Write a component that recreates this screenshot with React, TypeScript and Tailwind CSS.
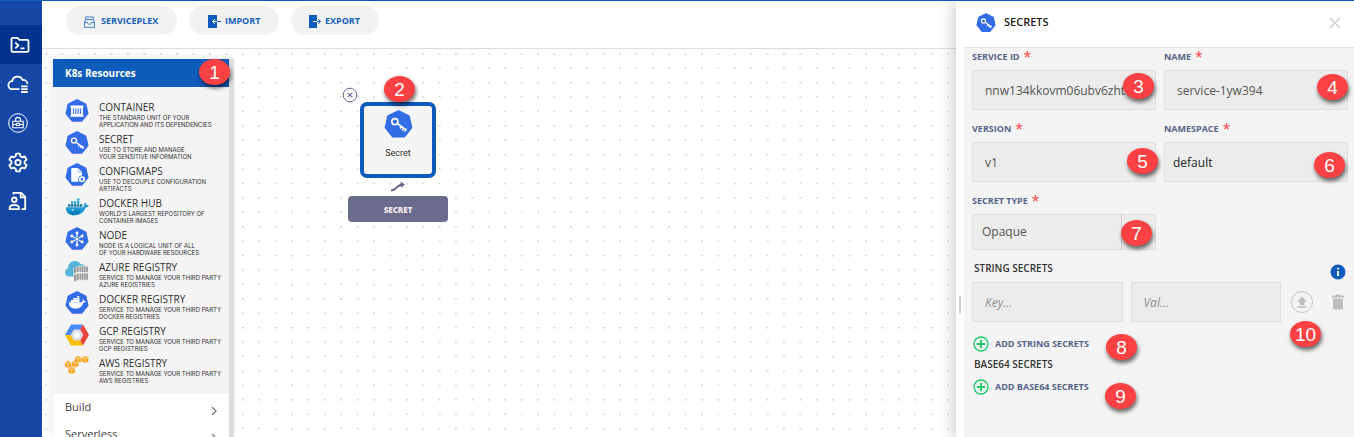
import type { ReactNode } from 'react';

const HEPTAGON = '12,1.2 20.4,5.3 22.5,14.4 16.7,21.7 7.3,21.7 1.5,14.4 3.6,5.3';

function Heptagon({ size, children }: { size: number; children: ReactNode }) {
  return (
    <svg width={size} height={size} viewBox="0 0 24 24" className="shrink-0" aria-hidden="true">
      <polygon points={HEPTAGON} fill="#326de6" stroke="#326de6" strokeWidth="2" strokeLinejoin="round" />
      {children}
    </svg>
  );
}

function KeyIcon({ size }: { size: number }) {
  return (
    <Heptagon size={size}>
      <g fill="none" stroke="#fff" strokeWidth="1.4">
        <circle cx="9" cy="9.6" r="2.5" />
        <path d="M11 11.2 18.2 16.4M14.4 13.8l-1.2 1.6M16.3 15.2l-1.2 1.7M18.6 15.4l-1.4 2.4" />
      </g>
    </Heptagon>
  );
}

function ContainerIcon() {
  return (
    <Heptagon size={24}>
      <path d="M5.500 6.500h13v2h-.6v7.600h.6v1.600h-13v-1.600h.6V8.500h-.6z" fill="#fff" />
      <path d="M8.500 9.500v5.500M10.800 9.500v5.500M13.100 9.500v5.500M15.400 9.500v5.500" stroke="#326de6" strokeWidth="1.100" />
    </Heptagon>
  );
}

function ConfigIcon() {
  return (
    <Heptagon size={24}>
      <path d="M7.200 5h6l3.800 4v4a4 4 0 0 0-3 5.800H7.200a1 1 0 0 1-1-1V6a1 1 0 0 1 1-1z" fill="#fff" />
      <path d="m13 5.200.2 3.700 3.600.2" stroke="#326de6" strokeWidth=".5" fill="none" />
      <circle cx="17" cy="16.300" r="3.700" fill="#326de6" />
      <circle cx="17" cy="16.300" r="2.200" fill="none" stroke="#fff" strokeWidth="1.700" />
    </Heptagon>
  );
}

function DockerHubIcon() {
  return (
    <svg width="24" height="24" viewBox="0 0 24 24" aria-hidden="true">
      <path d="M.8 12.200h17c1.200 0 1.600-.9 1.500-2.200-.1-1.400.2-2 .8-2.600 1 .7 1.400 1.700 1.300 2.700 1-.2 1.900 0 2.500.5-.6 1.300-1.600 1.900-3.200 1.900-1.700 4.600-5.300 7.700-11 7.700-5.600 0-8.900-2.600-8.900-8z" fill="#1d9ad3" />
      <path d="M2 16c3 .9 6.500.6 8.500-1 2 1.200 4.500 1 6.500 0-1.800 3-4.600 5.200-8.300 5.200C5.500 20.200 3 18.700 2 16z" fill="#0b7fb8" />
      <path d="M3 9.200h2.400v2.600H3zM6 9.200h2.400v2.600H6zM9 9.200h2.400v2.600H9zM12 9.200h2.400v2.600H12zM15 9.200h2.400v2.600H15z" fill="#16719c" />
      <path d="M6 6.300h2.400v2.400H6zM9 6.300h2.400v2.400H9zM12 6.300h2.400v2.400H12zM12 3.400h2.400v2.400H12z" fill="#25a5d8" />
      <circle cx="8" cy="15" r=".8" fill="#fff" />
    </svg>
  );
}

function NodeIcon() {
  return (
    <Heptagon size={24}>
      <g stroke="#fff" strokeWidth="1.300" fill="#fff">
        <path d="M12 10V6.500M12 14v3.500M10.300 11 7.200 9.200M13.700 13l3.100 1.800M13.700 11l3.100-1.800M10.300 13l-3.100 1.800" />
        <circle cx="12" cy="6" r=".8" />
        <circle cx="12" cy="18" r=".8" />
        <circle cx="6.800" cy="9" r=".8" />
        <circle cx="17.200" cy="9" r=".8" />
        <circle cx="6.800" cy="15" r=".8" />
        <circle cx="17.200" cy="15" r=".8" />
      </g>
      <circle cx="12" cy="12" r="1.500" fill="#fff" />
    </Heptagon>
  );
}

function AzureIcon() {
  return (
    <svg width="26" height="24" viewBox="0 0 26 24" className="shrink-0" aria-hidden="true">
      <path d="M4.500 17.500A4.300 4.300 0 0 1 4 9.200C4 5 7 2 10.800 2c2.600 0 4.700 1.200 5.900 3.300 3-.3 5 1.500 5.300 4v8.200z" fill="#59b4d9" />
      <path d="m9.500 9.500 5-2.700h10v15.500l-5 1h-10z" fill="#eee" />
      <g fill="#9c9c9c">
        <path d="m10 9.500 4.800-2.300v5.300L10 14.500zM15.500 7.400h8.500v5.600h-8.500z" />
        <path d="m10 16 4.800-1.600v6L10 22.500zM15.500 14.400h8.500v6.400h-8.500z" />
      </g>
      <path d="M17.500 7.400v13.400M19.700 7.400v13.400M21.900 7.400v13.400M12.500 8.500v13" stroke="#d9d9d9" strokeWidth=".7" />
    </svg>
  );
}

function DockerRegistryIcon() {
  return (
    <Heptagon size={24}>
      <path d="M3.800 11.300h12.500c1 0 1.300-.6 1.200-1.500 0-.8.2-1.200.5-1.500.7.500.9 1.100.9 1.800.7-.1 1.400 0 1.800.3-.4.900-1.300 1.400-2.400 1.400-1.100 3.600-3.500 5.800-7.600 5.800-4.200 0-6.900-2-6.900-6.300z" fill="#fff" />
      <path d="M6 9h8.500v2H6zM8.200 6.900h6.300v1.900H8.200zM12.300 5h2v1.700h-2z" fill="#fff" />
    </Heptagon>
  );
}

function GcpIcon() {
  return (
    <svg width="24" height="24" viewBox="0 0 24 24" aria-hidden="true">
      <path d="M0 12 6 1.400h12L15.200 6.500 12 12z" fill="#4c8bf5" />
      <path d="M0 12h12l3.200 5.400L18 22.400H6z" fill="#fbbc05" />
      <path d="M18 1.400 24 12l-6 10.400-2.800-5L12 12l3.200-5.500z" fill="#e8453c" />
      <path d="M8.800 6.500h6.400l3.200 5.500-3.200 5.400H8.800L5.600 12z" fill="#dcdcdc" />
      <circle cx="12" cy="12" r="2.900" fill="#fff" />
    </svg>
  );
}

function AwsCube({ x, y }: { x: number; y: number }) {
  return (
    <g transform={`translate(${x} ${y})`}>
      <path d="m0 1.200 3.200-1.200 3.200 1.200v4.400L3.200 7 0 5.600z" fill="#f5a21c" />
      <path d="m.3 1.500 2.900 1.100 2.900-1.100M3.200 2.600v4" stroke="#fff3d8" strokeWidth=".7" fill="none" />
    </g>
  );
}

function AwsIcon() {
  return (
    <svg width="24" height="24" viewBox="0 0 24 24" aria-hidden="true">
      <AwsCube x={10} y={1} />
      <AwsCube x={17} y={1} />
      <AwsCube x={0} y={6} />
      <AwsCube x={7} y={5.5} />
      <AwsCube x={3.5} y={12} />
    </svg>
  );
}

const resources = [
  { title: 'CONTAINER', lines: ['THE STANDARD UNIT OF YOUR', 'APPLICATION AND ITS DEPENDENCIES'], icon: <ContainerIcon /> },
  { title: 'SECRET', lines: ['USE TO STORE AND MANAGE', 'YOUR SENSITIVE INFORMATION'], icon: <KeyIcon size={24} /> },
  { title: 'CONFIGMAPS', lines: ['USE TO DECOUPLE CONFIGURATION', 'ARTIFACTS'], icon: <ConfigIcon /> },
  { title: 'DOCKER HUB', lines: ["WORLD'S LARGEST REPOSITORY OF", 'CONTAINER IMAGES'], icon: <DockerHubIcon /> },
  { title: 'NODE', lines: ['NODE IS A LOGICAL UNIT OF ALL', 'OF YOUR HARDWARE RESOURCES'], icon: <NodeIcon /> },
  { title: 'AZURE REGISTRY', lines: ['SERVICE TO MANAGE YOUR THIRD PARTY', 'AZURE REGISTRIES'], icon: <AzureIcon /> },
  { title: 'DOCKER REGISTRY', lines: ['SERVICE TO MANAGE YOUR THIRD PARTY', 'DOCKER REGISTRIES'], icon: <DockerRegistryIcon /> },
  { title: 'GCP REGISTRY', lines: ['SERVICE TO MANAGE YOUR THIRD PARTY', 'GCP REGISTRIES'], icon: <GcpIcon /> },
  { title: 'AWS REGISTRY', lines: ['SERVICE TO MANAGE YOUR THIRD PARTY', 'AWS REGISTRIES'], icon: <AwsIcon /> },
];

function Callout({ n, className }: { n: number; className: string }) {
  return (
    <span
      className={`absolute z-20 flex h-[26px] w-[31px] items-center justify-center rounded-[50%] bg-[#fb4143] font-['Liberation_Sans',sans-serif] text-[19px] leading-none font-normal text-white shadow-[1px_3px_4px_rgba(0,0,0,0.6)] ${className}`}
    >
      {n}
    </span>
  );
}

function Sidebar() {
  const item = 'flex h-[39px] w-full items-center justify-center pr-[6px]';
  return (
    <nav className="flex w-[42px] shrink-0 flex-col bg-[#1447a6] pt-6 text-white" aria-label="Main">
      <a href="#designer" aria-label="Designer" className="flex h-[39px] items-center justify-center bg-[#003290] pr-[2px]">
        <svg width="20" height="18" viewBox="0 0 20 18" fill="none" stroke="currentColor" strokeWidth="1.800">
          <path d="M1.500 3.200c0-.8.500-1.400 1.300-1.400h4.700l2 2h7.700c.8 0 1.300.6 1.300 1.300v9.300c0 .8-.5 1.400-1.300 1.400H2.800c-.8 0-1.300-.6-1.300-1.400z" />
          <path d="m5.300 6.500 3 2.900-3 2.900M10.500 12.300h4" />
        </svg>
      </a>
      <a href="#cloud" aria-label="Cloud resources" className={item}>
        <svg width="22" height="20" viewBox="0 0 22 20" fill="none" stroke="currentColor" strokeWidth="1.800">
          <path d="M12.500 15.200H5.600a4 4 0 0 1-.5-8A5.600 5.600 0 0 1 15.700 6a4.400 4.400 0 0 1 4.800 3.800" />
          <path d="M14.200 12.400h6.500M14.200 15.200h6.500M14.200 18h6.500" />
        </svg>
      </a>
      <a href="#vault" aria-label="Vault" className={item}>
        <svg width="20" height="20" viewBox="0 0 20 20" fill="none" stroke="currentColor">
          <circle cx="10" cy="10" r="9.300" strokeWidth="1" />
          <path d="M4.800 8.300h10.400v6.400H4.800zM7.500 8.300V6.900a2.500 2.500 0 0 1 5 0v1.400M4.800 11.500h3.700M11.500 11.500h3.700M8.500 10.300h3v2.200h-3z" strokeWidth="1.100" />
        </svg>
      </a>
      <a href="#settings" aria-label="Settings" className={item}>
        <svg width="22" height="22" viewBox="0 0 24 24" fill="none" stroke="currentColor" strokeWidth="2" strokeLinejoin="round">
          <path d="M10 2.800h4l.6 2.900 2 1.200 2.800-1 2 3.500-2.200 1.900v2.400l2.200 1.900-2 3.500-2.800-1-2 1.200-.6 2.900h-4l-.6-2.900-2-1.200-2.800 1-2-3.500 2.200-1.900v-2.400L2.600 9.400l2-3.500 2.800 1 2-1.200z" />
          <circle cx="12" cy="12.500" r="2.900" />
        </svg>
      </a>
      <a href="#contacts" aria-label="Contacts" className={item}>
        <svg width="20" height="20" viewBox="0 0 20 20" fill="none" stroke="currentColor" strokeWidth="1.800">
          <path d="M5.500 3.600V1.800h7.700l4 4v12.400h-3.700" />
          <path d="M12.700 1.800v4.500h4.500" />
          <circle cx="6.300" cy="8.800" r="2.300" />
          <path d="M1.700 18.200v-1.500c0-3.600 9.200-3.600 9.200 0v1.500z" />
        </svg>
      </a>
    </nav>
  );
}

function Toolbar() {
  const pill =
    "flex h-[29px] items-center rounded-full bg-[#f3f2f2] font-['Open_Sans',sans-serif] text-[9px] font-bold text-[#1560bd]";
  return (
    <header className="flex h-12 shrink-0 items-start gap-3 border-b border-[#dcdcdc] bg-white pt-[5px] pl-6">
      <button type="button" className={`${pill} w-[111px] gap-[6px] pl-[18px]`}>
        <svg width="11" height="12" viewBox="0 0 11 12" className="mt-[2px]" fill="none" stroke="currentColor" strokeWidth=".8">
          <path d="M.5 6.500h3c0 2.500 4 2.500 4 0h3v4.800H.5zM.5 6.500l1.300-3h7.400l1.300 3M1.700 3.300V1h7.600v2.300" />
        </svg>
        SERVICEPLEX
      </button>
      <button type="button" className={`${pill} w-[90px] gap-1 pl-[18px]`}>
        <svg width="14" height="13" viewBox="0 0 14 13" className="mt-[2px]" fill="none">
          <path d="M1 0h9v13H1z" fill="#0d5bbb" />
          <path d="M10 6.500H5.500M7.800 4.200 5.500 6.500l2.300 2.300" stroke="#fff" strokeWidth="1" />
          <path d="M10 6.500h4" stroke="#0d5bbb" strokeWidth="1" />
        </svg>
        IMPORT
      </button>
      <button type="button" className={`${pill} w-[88px] gap-1 pl-[17px]`}>
        <svg width="13" height="13" viewBox="0 0 13 13" className="mt-[2px]" fill="none">
          <path d="M1 0h8v13H1z" fill="#0d5bbb" />
          <path d="M5 6.500h4" stroke="#fff" />
          <path d="M9 6.500h3.500M10.300 4.200l2.300 2.300-2.300 2.300" stroke="#0d5bbb" />
        </svg>
        EXPORT
      </button>
    </header>
  );
}

function Palette() {
  return (
    <aside className="relative z-10 flex w-[181px] shrink-0 border-r-[5px] border-[#dedede] bg-white shadow-[-2px_-2px_8px_rgba(0,0,0,0.08)]">
      <div className="relative flex min-w-0 grow flex-col">
        <h2 className="flex h-7 shrink-0 items-center bg-[#0d5bbb] pl-3 font-['Open_Sans',sans-serif] text-[10px] font-bold text-white">
          K8s Resources
        </h2>
        <Callout n={1} className="-right-px top-0" />
        <ul className="flex shrink-0 flex-col bg-[#f4f4f4] pt-3 pb-[7px]">
          {resources.map((r) => (
            <li key={r.title} className="flex h-8 gap-[10px] pl-3">
              <span className="flex h-6 w-6 shrink-0 items-center justify-center">{r.icon}</span>
              <span className="flex flex-col pt-[2px] whitespace-nowrap text-[#2f2f2f]">
                <span className="font-['Open_Sans',sans-serif] text-[10px] leading-[13px]">{r.title}</span>
                <span className="font-['Inter',sans-serif] text-[6px] leading-[7px]">{r.lines[0]}</span>
                <span className="font-['Inter',sans-serif] text-[6px] leading-[7px]">{r.lines[1]}</span>
              </span>
            </li>
          ))}
        </ul>
        {['Build', 'Serverless'].map((name) => (
          <button
            key={name}
            type="button"
            className="flex h-[27px] shrink-0 items-center justify-between pr-3 pl-3 font-['Open_Sans',sans-serif] text-[11px] text-[#444]"
          >
            {name}
            <svg width="6" height="10" viewBox="0 0 6 10" className="mt-[6px]" fill="none" stroke="#777" strokeWidth="1.300">
              <path d="m1 1 4 4-4 4" />
            </svg>
          </button>
        ))}
      </div>
    </aside>
  );
}

function Canvas() {
  return (
    <div className="relative flex min-h-0 grow overflow-hidden bg-white pt-[10px] pl-[11px]">
      <svg className="absolute inset-0 h-full w-full" aria-hidden="true">
        <defs>
          <pattern id="grid" x="3" y="4" width="16.4" height="14.42" patternUnits="userSpaceOnUse">
            <rect x="0" y="0" width="2" height="1.500" fill="#d4d4d4" />
          </pattern>
        </defs>
        <rect width="100%" height="100%" fill="url(#grid)" />
      </svg>
      <Palette />
      <button type="button" aria-label="Remove node" className="absolute top-[38px] left-[300px]">
        <svg width="16" height="16" viewBox="0 0 16 16" fill="#fff" stroke="#65668b">
          <circle cx="8" cy="8" r="6.800" />
          <path d="m5.800 5.800 4.400 4.400M10.200 5.800l-4.400 4.400" strokeWidth="1.100" />
        </svg>
      </button>
      <div className="absolute top-[53px] left-[318px] flex h-[76px] w-[76px] flex-col items-center gap-2 rounded-[7px] border-4 border-[#0d5bbb] bg-[#f5f5f5] pt-1">
        <KeyIcon size={29} />
        <span className="font-['Roboto',sans-serif] text-[9px] leading-[12px] text-[#333]">Secret</span>
        <Callout n={2} className="-top-[30px] left-5" />
      </div>
      <svg className="absolute top-[132px] left-[348px]" width="16" height="12" viewBox="0 0 16 12" fill="none" aria-hidden="true">
        <path d="M1 9.500c6 0 5-5.500 11-5.700" stroke="#65668b" strokeWidth="2" />
        <path d="m10.500.8 4.500 2.800-4 3.200z" fill="#65668b" />
      </svg>
      <button
        type="button"
        className="absolute top-[147px] left-[306px] h-[26px] w-[100px] rounded-[4px] bg-[#6b6b8e] pt-[2px] font-['Open_Sans',sans-serif] text-[8px] font-extrabold text-[#f3e6e6]"
      >
        SECRET
      </button>
    </div>
  );
}

const box = "block h-10 w-full rounded-none border border-[#dedede] bg-[#ececec] font-['Open_Sans',sans-serif] text-[12px] outline-none";
const labelText = "font-['Open_Sans',sans-serif] text-[9px] leading-[14px] font-bold text-[#56658a]";

function Field({ id, label, children }: { id: string; label: string; children: ReactNode }) {
  return (
    <div className="relative flex min-w-0 flex-col gap-[6px]">
      <label htmlFor={id} className={`${labelText} flex gap-1`}>
        {label}
        <span className="text-[14px] font-normal text-[#ff4040]">*</span>
      </label>
      {children}
    </div>
  );
}

function AddButton({ children }: { children: ReactNode }) {
  return (
    <button type="button" className={`${labelText} flex items-center gap-[6px] whitespace-nowrap`}>
      <svg width="16" height="16" viewBox="0 0 16 16" fill="none" stroke="#1ec867" strokeWidth="1.300">
        <circle cx="8" cy="8" r="7" />
        <path d="M8 3.800v8.400M3.800 8h8.400" strokeWidth="1.800" />
      </svg>
      {children}
    </button>
  );
}

function SecretsPanel() {
  return (
    <section className="relative z-20 flex w-[398px] shrink-0 flex-col bg-white pl-2 shadow-[-3px_0_14px_rgba(0,0,0,0.2)]">
      <span className="absolute top-1/2 left-[3px] mt-[77px] h-[18px] w-[2px] bg-[#d0d0d0]" />
      <header className="flex h-[47px] shrink-0 items-center border-b border-[#e4e4e4] pr-[13px] pb-[3px] pl-3">
        <KeyIcon size={20} />
        <h1 className="ml-2 grow font-['Open_Sans',sans-serif] text-[11px] font-semibold text-[#222]">SECRETS</h1>
        <button type="button" aria-label="Close">
          <svg width="12" height="12" viewBox="0 0 12 12" stroke="#cbcbcb" strokeWidth="1.500">
            <path d="m1 1 10 10M11 1 1 11" />
          </svg>
        </button>
      </header>
      <form className="grow bg-[#f4f4f4] pt-[2px] pr-[6px] pl-2">
        <div className="grid grid-cols-2 gap-x-2 gap-y-3">
          <Field id="service-id" label="SERVICE ID">
            <input id="service-id" className={`${box} pl-3 text-[#555]`} defaultValue="nnw134kkovm06ubv6zht" />
            <Callout n={3} className="top-[23px] right-[2px]" />
          </Field>
          <Field id="name" label="NAME">
            <input id="name" className={`${box} pl-3 text-[#555]`} defaultValue="service-1yw394" />
            <Callout n={4} className="top-[24px] right-0" />
          </Field>
          <Field id="version" label="VERSION">
            <input id="version" className={`${box} pl-3 text-[#555]`} defaultValue="v1" />
            <Callout n={5} className="top-[26px] -right-[2px]" />
          </Field>
          <Field id="namespace" label="NAMESPACE">
            <input id="namespace" className={`${box} pl-2 text-[#222]`} defaultValue="default" />
            <Callout n={6} className="top-[30px] right-[3px]" />
          </Field>
          <Field id="secret-type" label="SECRET TYPE">
            <select
              id="secret-type"
              className="block h-9 w-full appearance-none rounded-none border border-[#dedede] bg-[#ececec] pl-[9px] font-['Open_Sans',sans-serif] text-[12px] text-[#555] outline-none"
            >
              <option>Opaque</option>
            </select>
            <span className="absolute right-[34px] bottom-0 h-9 w-px bg-[#cfcfcf]" />
            <Callout n={7} className="right-1 bottom-1" />
          </Field>
        </div>
        <div className="mt-[10px] flex h-[22px] items-start justify-between pr-[2px] pl-[2px]">
          <h2 className="pt-px font-['Open_Sans',sans-serif] text-[10px] leading-[14px] font-semibold text-[#333]">STRING SECRETS</h2>
          <button type="button" aria-label="About string secrets" className="mt-1">
            <svg width="16" height="16" viewBox="0 0 16 16">
              <circle cx="8" cy="8" r="7.500" fill="#0d5bbb" />
              <path d="M8 3.700v1.700M8 7v5" stroke="#fff" strokeWidth="1.800" />
            </svg>
          </button>
        </div>
        <div className="flex items-center gap-2">
          <input aria-label="Key" placeholder="Key..." className={`${box} min-w-0 flex-1 pl-3 placeholder:text-[#8e8e8e] placeholder:italic`} />
          <input aria-label="Value" placeholder="Val..." className={`${box} min-w-0 flex-1 pl-3 placeholder:text-[#8e8e8e] placeholder:italic`} />
          <div className="flex w-[59px] shrink-0 items-center justify-between pr-1 pl-px">
            <button type="button" aria-label="Upload value" className="relative">
              <svg width="24" height="24" viewBox="0 0 24 24" fill="none" stroke="#c4c4c4">
                <circle cx="12" cy="12" r="10.500" />
                <path d="M12 6.500 17 12h-2.800v3.200H9.800V12H7zM7.500 16.300h9v1.500h-9z" fill="#bdbdbd" stroke="none" />
              </svg>
              <Callout n={10} className="top-[31px] left-0" />
            </button>
            <button type="button" aria-label="Delete secret">
              <svg width="12" height="16" viewBox="0 0 12 16" fill="#bdbdbd">
                <path d="M0 1.500h3.500l.8-1h3.400l.8 1H12v2H0zM1 4.500h10v9.700c0 .8-.6 1.300-1.300 1.300H2.300c-.7 0-1.300-.5-1.300-1.300z" />
              </svg>
            </button>
          </div>
        </div>
        <div className="relative mt-[14px] flex pl-px">
          <AddButton>ADD STRING SECRETS</AddButton>
          <Callout n={8} className="-top-[2px] left-[134px]" />
        </div>
        <h2 className="mt-[5px] pl-[2px] font-['Open_Sans',sans-serif] text-[10px] leading-[14px] font-semibold text-[#333]">BASE64 SECRETS</h2>
        <div className="relative mt-2 flex pl-px">
          <AddButton>ADD BASE64 SECRETS</AddButton>
          <Callout n={9} className="top-1 left-[133px]" />
        </div>
      </form>
    </section>
  );
}

export default function App() {
  return (
    <div className="flex h-screen overflow-hidden border-t border-[#0d5bbb] bg-white">
      <Sidebar />
      <main className="flex min-w-0 grow flex-col">
        <Toolbar />
        <Canvas />
      </main>
      <SecretsPanel />
    </div>
  );
}
